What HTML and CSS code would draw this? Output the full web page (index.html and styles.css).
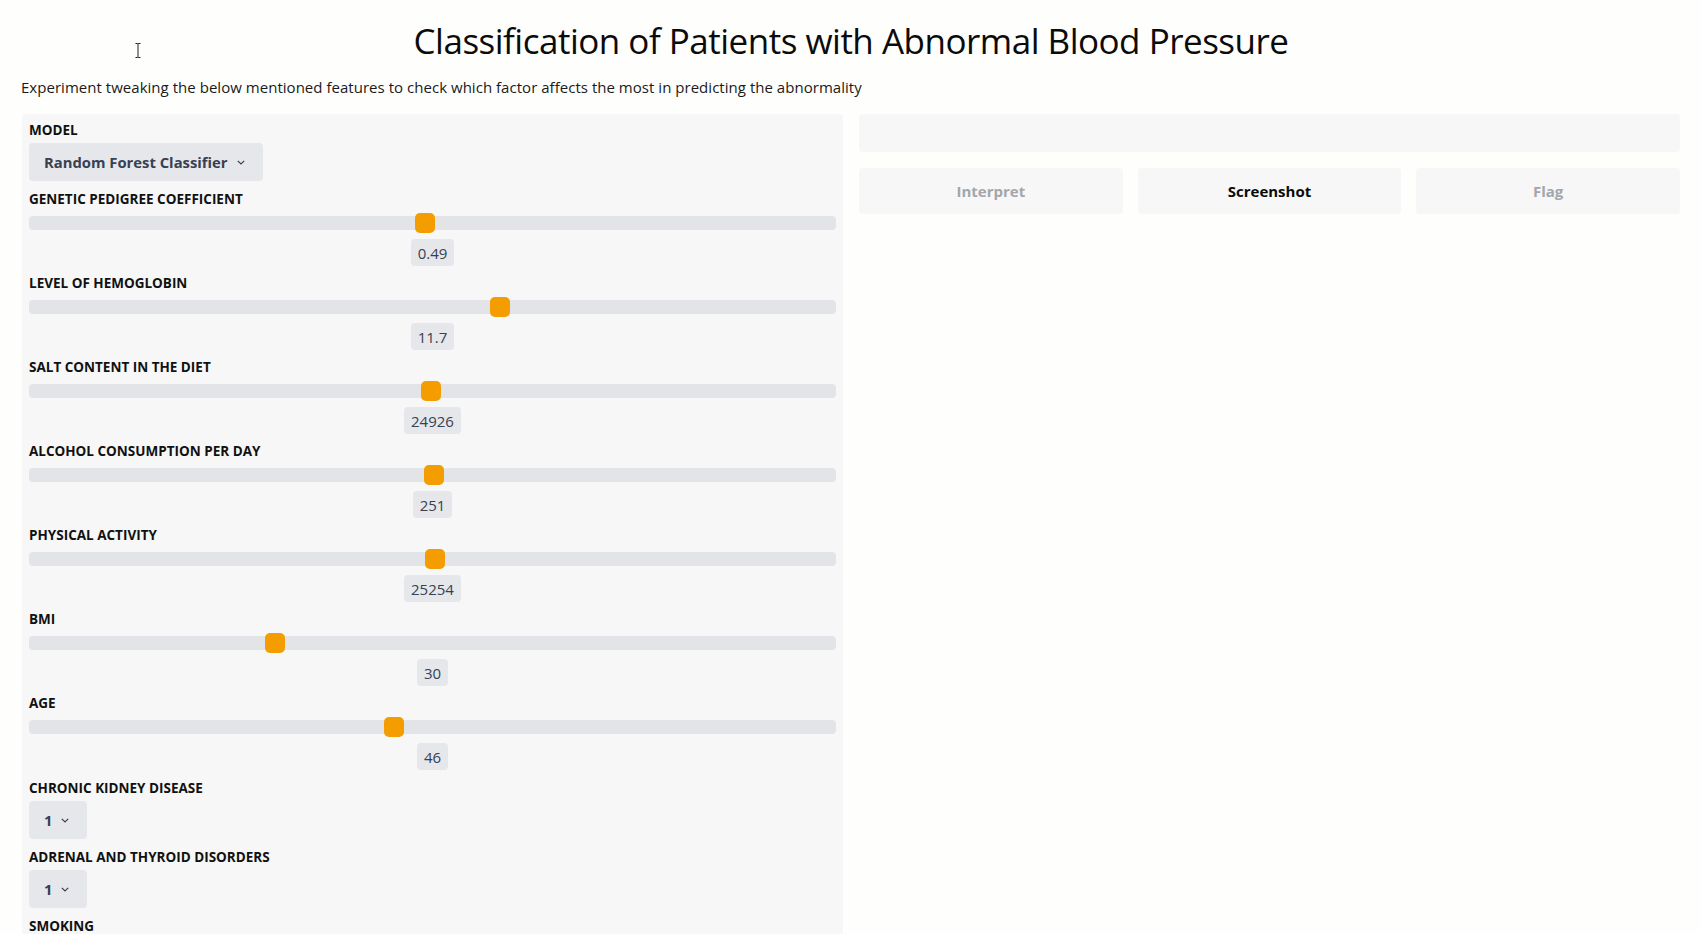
FILE: index.html
```html
<!DOCTYPE html>
<html lang="en">
<head>
<meta charset="utf-8">
<title>Classification of Patients with Abnormal Blood Pressure</title>
<link rel="stylesheet" href="styles.css">
</head>
<body>
<div class="app">
  <header class="header">
    <h1 class="title">Classification of Patients with Abnormal Blood Pressure</h1>
    <p class="desc">Experiment tweaking the below mentioned features to check which factor affects the most in predicting the abnormality</p>
  </header>
  <main class="main">
    <section class="panel inputs">
      <div class="field">
        <div class="label">Model</div>
        <div class="select">Random Forest Classifier<svg class="chev" width="8" height="5" viewBox="0 0 8 5"><polyline points="0.8,0.8 4,4 7.2,0.8" fill="none" stroke="#374151" stroke-width="1.2"/></svg></div>
      </div>
      <div class="field slider-field">
        <div class="label">Genetic Pedigree Coefficient</div>
        <input class="range" type="range" min="0" max="1" step="0.01" value="0.49">
        <div class="val">0.49</div>
      </div>
      <div class="field slider-field">
        <div class="label">Level of Hemoglobin</div>
        <input class="range" type="range" min="3.5" max="17.5" step="0.1" value="11.7">
        <div class="val">11.7</div>
      </div>
      <div class="field slider-field">
        <div class="label">Salt Content in the Diet</div>
        <input class="range" type="range" min="22" max="50000" step="1" value="24926">
        <div class="val">24926</div>
      </div>
      <div class="field slider-field">
        <div class="label">Alcohol Consumption per Day</div>
        <input class="range" type="range" min="0" max="500" step="1" value="251">
        <div class="val">251</div>
      </div>
      <div class="field slider-field">
        <div class="label">Physical Activity</div>
        <input class="range" type="range" min="500" max="49700" step="1" value="25254">
        <div class="val">25254</div>
      </div>
      <div class="field slider-field">
        <div class="label">BMI</div>
        <input class="range" type="range" min="0" max="100" step="1" value="30">
        <div class="val">30</div>
      </div>
      <div class="field slider-field">
        <div class="label">Age</div>
        <input class="range" type="range" min="18" max="80" step="1" value="46">
        <div class="val">46</div>
      </div>
      <div class="field">
        <div class="label">Chronic Kidney Disease</div>
        <div class="select">1<svg class="chev" width="8" height="5" viewBox="0 0 8 5"><polyline points="0.8,0.8 4,4 7.2,0.8" fill="none" stroke="#374151" stroke-width="1.2"/></svg></div>
      </div>
      <div class="field">
        <div class="label">Adrenal and Thyroid Disorders</div>
        <div class="select">1<svg class="chev" width="8" height="5" viewBox="0 0 8 5"><polyline points="0.8,0.8 4,4 7.2,0.8" fill="none" stroke="#374151" stroke-width="1.2"/></svg></div>
      </div>
      <div class="field">
        <div class="label">Smoking</div>
        <div class="select">1<svg class="chev" width="8" height="5" viewBox="0 0 8 5"><polyline points="0.8,0.8 4,4 7.2,0.8" fill="none" stroke="#374151" stroke-width="1.2"/></svg></div>
      </div>
    </section>
    <section class="outputs">
      <div class="panel output-box"></div>
      <div class="actions">
        <button class="btn muted">Interpret</button>
        <button class="btn">Screenshot</button>
        <button class="btn muted">Flag</button>
      </div>
    </section>
  </main>
  <svg class="cursor" width="6" height="15" viewBox="0 0 6 15"><path d="M0.5 0.5 H2.5 L3 1 L3.5 0.5 H5.5 M3 1 V14 M0.5 14.5 H2.5 L3 14 L3.5 14.5 H5.5" fill="none" stroke="#222" stroke-width="1"/></svg>
</div>
</body>
</html>
```

FILE: styles.css
```css
* { box-sizing: border-box; }
html, body { margin: 0; padding: 0; }
body {
  background: #fefefc;
  color: #111111;
  font-family: "Open Sans", "Noto Sans", sans-serif;
}
.app {
  position: relative;
  padding: 0 22px;
}
.header {
  padding-top: 19px;
}
.title {
  margin: 0;
  text-align: center;
  font-size: 35px;
  line-height: 43px;
  font-weight: 400;
  letter-spacing: -0.5px;
  color: #0b0b0b;
}
.desc {
  margin: 14px 0 0;
  margin-left: -1px;
  font-size: 15px;
  line-height: 22px;
  letter-spacing: 0.03px;
  color: #1a1a1a;
}
.main {
  display: grid;
  grid-template-columns: 1fr 1fr;
  column-gap: 16px;
  margin-top: 16px;
  align-items: start;
}
.panel {
  background: #f6f7f6;
  border-radius: 4px;
}
.inputs {
  padding: 8px 7px 12px;
  display: flex;
  flex-direction: column;
  gap: 10px;
}
.field {
  display: flex;
  flex-direction: column;
  align-items: flex-start;
}
.label {
  font-size: 13.5px;
  line-height: 16px;
  font-weight: 700;
  text-transform: uppercase;
  color: #111111;
  margin-bottom: 5px;
}
.select {
  display: inline-flex;
  align-items: center;
  gap: 9px;
  height: 38px;
  padding: 0 18px 0 15px;
  background: #e5e7eb;
  border-radius: 4px;
  font-size: 14.8px;
  font-weight: 700;
  color: #374151;
}
.chev { display: block; margin-top: 1px; }
.slider-field { align-items: stretch; }
.slider-field .label { margin-bottom: 5.5px; }
.range {
  -webkit-appearance: none;
  appearance: none;
  width: 100%;
  height: 20px;
  margin: 0;
  padding: 0;
  background: transparent;
}
.range::-webkit-slider-runnable-track {
  height: 14px;
  background: #e3e4e7;
  border-radius: 4px;
}
.range::-webkit-slider-thumb {
  -webkit-appearance: none;
  appearance: none;
  width: 20px;
  height: 20px;
  margin-top: -3px;
  background: #f39d00;
  border: none;
  border-radius: 5px;
}
.val {
  align-self: center;
  margin-top: 6.5px;
  height: 27px;
  padding: 0 7px;
  display: flex;
  align-items: center;
  background: #e5e7eb;
  border-radius: 4px;
  font-size: 15px;
  color: #374151;
}
.slider-field + .slider-field { margin-top: -1px; }
.outputs {
  display: flex;
  flex-direction: column;
}
.output-box {
  height: 38px;
}
.actions {
  margin-top: 16px;
  display: grid;
  grid-template-columns: repeat(3, 1fr);
  gap: 15px;
}
.btn {
  height: 46px;
  border: none;
  border-radius: 4px;
  background: #f6f7f6;
  font-family: inherit;
  font-size: 15px;
  font-weight: 700;
  color: #0b0b0b;
}
.btn.muted { color: #a3a6ad; }
.cursor {
  position: absolute;
  left: 135px;
  top: 43px;
}
```
